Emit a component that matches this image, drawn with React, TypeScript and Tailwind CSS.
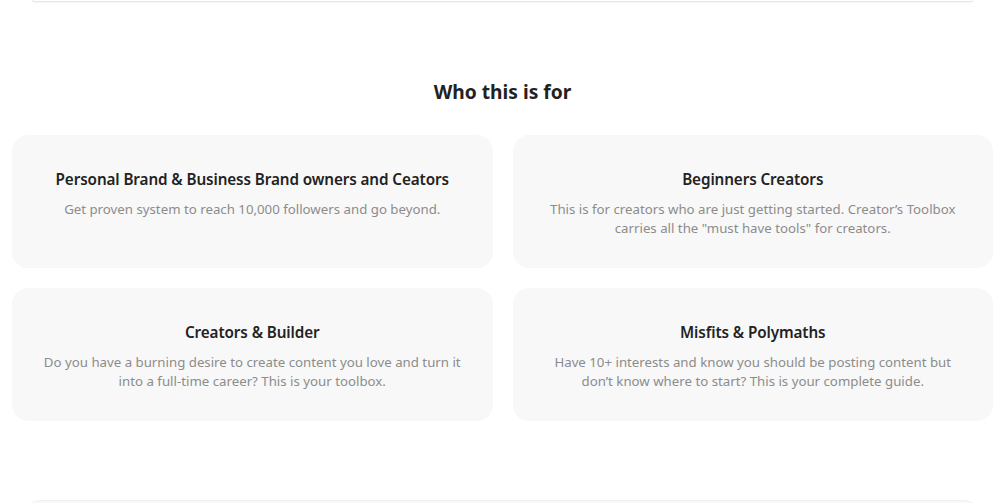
import React from "react";

const cards = [
  {
    title: "Personal Brand & Business Brand owners and Ceators",
    desc: "Get proven system to reach 10,000 followers and go beyond.",
  },
  {
    title: "Beginners Creators",
    desc: 'This is for creators who are just getting started. Creator\u2019s Toolbox carries all the "must have tools" for creators.',
  },
  {
    title: "Creators & Builder",
    desc: "Do you have a burning desire to create content you love and turn it into a full-time career? This is your toolbox.",
  },
  {
    title: "Misfits & Polymaths",
    desc: "Have 10+ interests and know you should be posting content but don\u2019t know where to start? This is your complete guide.",
  },
];

export default function App() {
  return (
    <div
      className="w-[1005px] h-[503px] overflow-hidden bg-white"
      style={{ fontFamily: '"Noto Sans", "Open Sans", sans-serif' }}
    >
      <div className="mx-[32px] w-[941px] h-[2px] border-b border-x border-[#e6e6e6] rounded-b-md shadow-[0_1px_2px_rgba(0,0,0,0.04)]" />
      <h2 className="mt-[76px] text-center text-[19.2px] leading-[28px] font-bold text-[#222]">
        Who this is for
      </h2>
      <div className="mt-[29px] px-[12px] grid grid-cols-2 gap-[20px]">
        {cards.map((c) => (
          <div
            key={c.title}
            className="bg-[#f8f8f8] rounded-[16px] h-[133px] px-[30px] pt-[32px] text-center"
          >
            <div className="text-[15.25px] leading-[24px] font-semibold text-[#222] tracking-[-0.1px] -mx-[6px]">
              {c.title}
            </div>
            <p className="mt-[9px] text-[13.25px] leading-[19px] text-[#8c8c8c]">
              {c.desc}
            </p>
          </div>
        ))}
      </div>
      <div className="mt-[79px] mx-[25px] h-[40px] bg-[#f8f8f8] rounded-t-[16px] border-t border-[#f0f0f0]" />
    </div>
  );
}
